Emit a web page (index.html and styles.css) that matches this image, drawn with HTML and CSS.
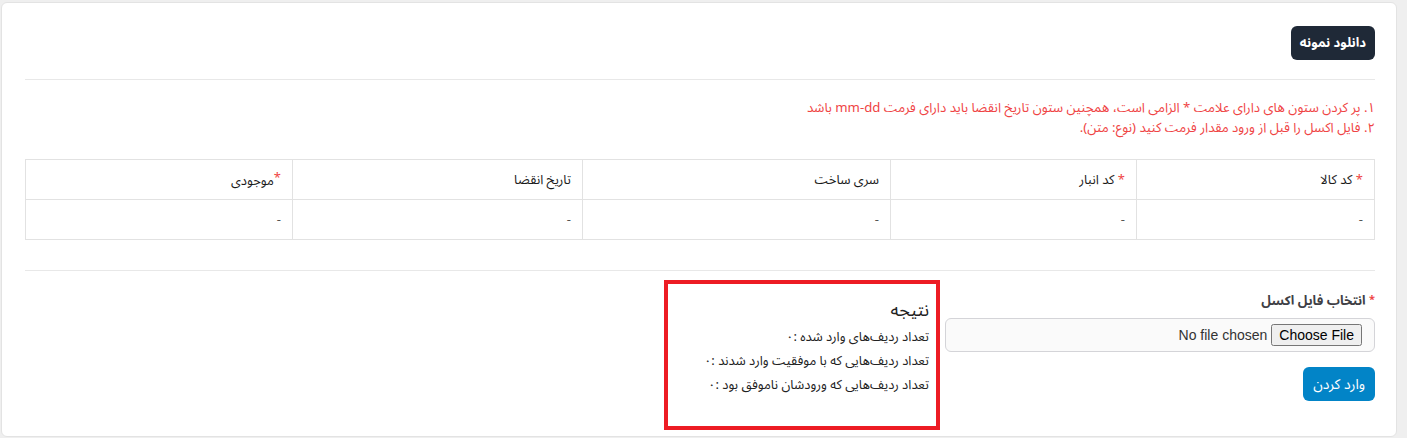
FILE: index.html
```html
<!DOCTYPE html>
<html lang="fa" dir="rtl">
<head>
<meta charset="utf-8">
<title>ورود از اکسل</title>
<link rel="stylesheet" href="styles.css">
</head>
<body>
<div class="card">
  <div class="top-bar">
    <button class="btn btn-dark" type="button">دانلود نمونه</button>
  </div>
  <hr class="divider">
  <div class="notes">
    <div>۱. پر کردن ستون های دارای علامت * الزامی است، همچنین ستون تاریخ انقضا باید دارای فرمت mm-dd باشد</div>
    <div>۲. فایل اکسل را قبل از ورود مقدار فرمت کنید (نوع: متن).</div>
  </div>
  <table class="sample">
    <thead>
      <tr>
        <th class="c1"><span class="req">*</span> کد کالا</th>
        <th class="c2"><span class="req">*</span> کد انبار</th>
        <th class="c3">سری ساخت</th>
        <th class="c4">تاریخ انقضا</th>
        <th class="c5"><span class="req sup">*</span>موجودی</th>
      </tr>
    </thead>
    <tbody>
      <tr>
        <td>-</td><td>-</td><td>-</td><td>-</td><td>-</td>
      </tr>
    </tbody>
  </table>
  <hr class="divider divider-2">
  <div class="import-row">
    <div class="upload-col">
      <label class="field-label"><span class="req small">*</span> انتخاب فایل اکسل</label>
      <div class="file-box"><input type="file" class="file-input"></div>
      <button class="btn btn-blue" type="button">وارد کردن</button>
    </div>
    <div class="result-box">
      <h3 class="result-title">نتیجه</h3>
      <p>تعداد ردیف‌های وارد شده :۰</p>
      <p>تعداد ردیف‌هایی که با موفقیت وارد شدند :۰</p>
      <p>تعداد ردیف‌هایی که ورودشان ناموفق بود :۰</p>
    </div>
  </div>
</div>
</body>
</html>
```

FILE: styles.css
```css
* { box-sizing: border-box; }
html, body { margin: 0; padding: 0; }
body {
  background: #efefef;
  font-family: "Noto Sans Arabic", "Noto Naskh Arabic", "DejaVu Sans", sans-serif;
  font-size: 13px;
  color: #222;
  height: 438px;
  overflow: hidden;
}
.card {
  margin: 2px 10px 0 1px;
  background: #fff;
  border: 1px solid #e3e3e3;
  border-radius: 6px;
  padding: 23px 21px 0 23px;
  height: 435px;
}
.top-bar { display: flex; }
.btn {
  font-family: inherit;
  border: 0;
  border-radius: 6px;
  color: #fff;
  cursor: pointer;
}
.btn-dark {
  background: #1f2937;
  font-weight: bold;
  font-size: 13px;
  height: 34px;
  padding: 0 9px;
}
.divider {
  border: 0;
  border-top: 1px solid #e8e8e8;
  margin: 19px 0 0 0;
  height: 0;
}
.notes {
  margin-top: 18px;
  color: #ef4444;
  line-height: 20px;
  font-size: 13.2px;
}
.notes div { height: 20px; overflow: visible; }
.sample {
  margin-top: 21px;
  width: 100%;
  border-collapse: collapse;
  table-layout: fixed;
}
.sample th, .sample td {
  border: 1px solid #e2e2e2;
  height: 40px;
  padding: 0 11px;
  text-align: right;
  font-weight: normal;
  font-size: 13px;
  color: #1a1a1a;
}
.sample td { color: #555; }
.c1 { width: 238px; }
.c2 { width: 246px; }
.c3 { width: 308px; }
.c4 { width: 290px; }
.req { color: #ef4444; }
.req.sup { vertical-align: 3px; }
.req.small { font-size: 11px; vertical-align: 2px; }
.divider-2 { margin-top: 30px; }
.import-row {
  display: grid;
  grid-template-columns: 430px 276px;
  column-gap: 5px;
  margin-top: 9px;
}
.upload-col {
  display: flex;
  flex-direction: column;
  align-items: flex-start;
  padding-top: 10px;
}
.field-label {
  font-weight: bold;
  color: #3f3f46;
  font-size: 13px;
  line-height: 20px;
}
.file-box {
  margin-top: 7px;
  width: 100%;
  height: 34px;
  border: 1px solid #d4d4d8;
  border-radius: 6px;
  background: #fafafa;
  display: flex;
  align-items: center;
  padding: 0 12px;
}
.file-input {
  font-family: "Liberation Sans", Arial, sans-serif;
  font-size: 14px;
  color: #333;
  width: 100%;
}
.btn-blue {
  margin-top: 15px;
  background: #0284c7;
  font-size: 14px;
  height: 34px;
  padding: 0 10px;
}
.result-box {
  border: 4px solid #ed1c24;
  height: 150px;
  padding: 13px 7px 0 10px;
}
.result-title {
  margin: 0 0 2px 0;
  font-size: 18px;
  font-weight: normal;
  line-height: 26px;
}
.result-box p {
  margin: 0;
  line-height: 24px;
  font-size: 13px;
}
```
